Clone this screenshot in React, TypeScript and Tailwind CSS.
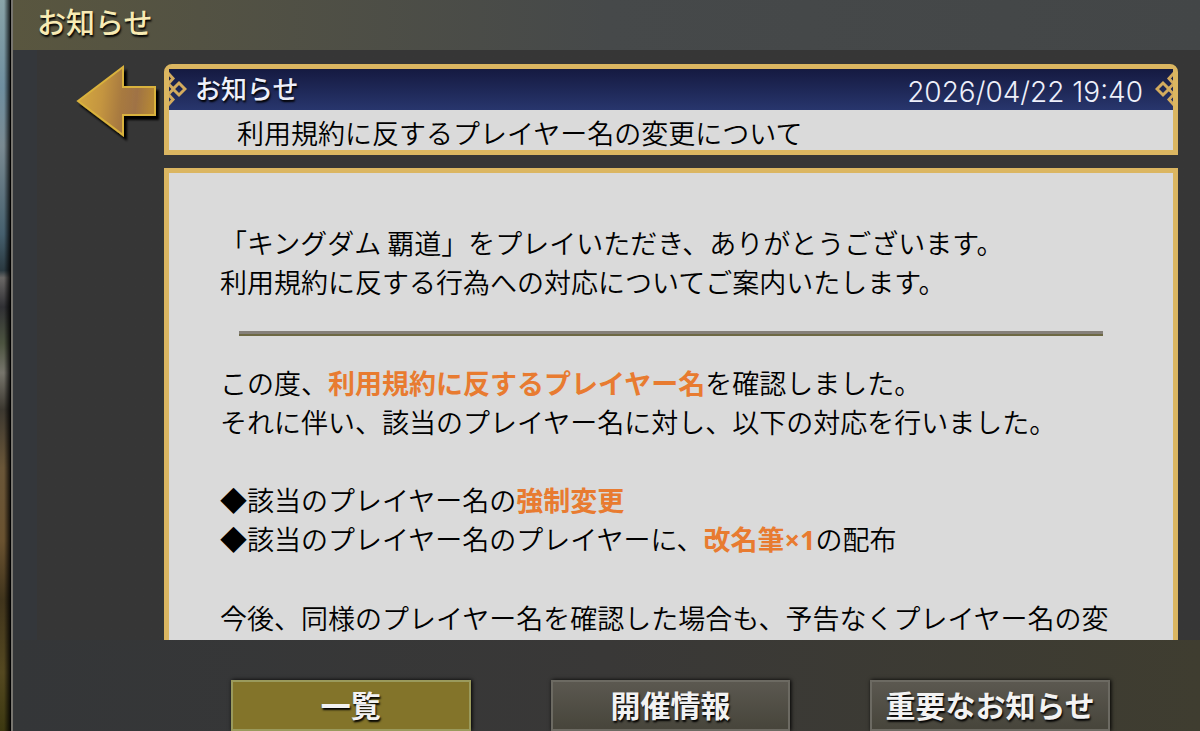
import type { ReactNode } from "react";

const tabs = [
	{ label: "一覧", active: true },
	{ label: "開催情報", active: false },
	{ label: "重要なお知らせ", active: false },
];

function BackArrow() {
	return (
		<svg width="90" height="80" viewBox="0 0 90 80" aria-hidden="true">
			<defs>
				<linearGradient id="arrowFill" x1="0" y1="0" x2="1" y2="0.1">
					<stop offset="0" stopColor="#d6aa42" />
					<stop offset="0.35" stopColor="#c4953f" />
					<stop offset="0.6" stopColor="#a87a40" />
					<stop offset="0.8" stopColor="#9f7245" />
					<stop offset="1" stopColor="#b48636" />
				</linearGradient>
				<filter id="arrowShadow" x="-10%" y="-10%" width="130%" height="130%">
					<feDropShadow dx="3" dy="4" stdDeviation="1" floodColor="#000" floodOpacity="1" />
				</filter>
			</defs>
			<path
				d="M3 37 L48 3 V23 H80 V51 H48 V71 Z"
				fill="url(#arrowFill)"
				stroke="#d9b23c"
				strokeWidth="2"
				filter="url(#arrowShadow)"
			/>
		</svg>
	);
}

function CornerOrnament({ flip = false }: { flip?: boolean }) {
	return (
		<svg
			width="18"
			height="41"
			viewBox="0 0 18 41"
			aria-hidden="true"
			className={flip ? "shrink-0 -scale-x-100" : "shrink-0"}
		>
			<g fill="none" stroke="#d3ab5e" strokeWidth="3">
				<path d="M10 14 L16 20 L10 26 L4 20 Z" />
				<path d="M-1 4 L4 9.5 L-1 15" />
				<path d="M-1 25 L4 30.5 L-1 36" />
				<path d="M0 15.5 L4.5 20 L0 24.5" />
			</g>
		</svg>
	);
}

function Mark({ children }: { children: ReactNode }) {
	return <strong className="font-bold text-[#e87b30]">{children}</strong>;
}

function App() {
	return (
		<div
			lang="ja"
			className="flex h-screen overflow-hidden bg-[#363636] text-black font-['Noto_Sans_CJK_JP',sans-serif]"
		>
			{/* slice of the game scene behind the dialog */}
			<div className="w-[10px] shrink-0 bg-[linear-gradient(to_right,transparent_40%,#000c),linear-gradient(to_bottom,#8aa4a8,#6f8fa0_12%,#7a8a92_20%,#46606e_32%,#2a3940_37%,#6a6866_38%,#303034_42%,#4c5440_47%,#77756c_51%,#3c3830_56%,#6a5638_64%,#6a5230_74%,#40341c_82%,#544820_92%,#3c3810)]" />
			<div className="w-[3px] shrink-0 border-l border-black bg-[#77756f]" />
			<div className="flex min-w-0 flex-1 flex-col">
				<header className="flex h-[50px] shrink-0 items-center bg-linear-to-r from-[#59563f] via-[#46494a] to-[#434647] px-6 pb-2">
					<h1 className="text-[29px] leading-9 font-medium text-[#f8ebb4] [text-shadow:1px_2px_2px_#000]">お知らせ</h1>
				</header>

				<main className="flex min-h-0 flex-1 bg-linear-to-r from-[#34373b] from-[24px] to-[#363636] to-[24px] pt-[14px] pr-[22px]">
					<div className="w-[151px] shrink-0 pl-[62px]">
						<button type="button" aria-label="戻る" className="block cursor-pointer">
							<BackArrow />
						</button>
					</div>
					<div className="flex min-w-0 flex-1 flex-col gap-[13px]">
						<section className="shrink-0 rounded-t-lg border-5 border-[#dbb661] bg-[#dadada]">
							<div className="flex h-[41px] items-center bg-linear-to-b from-[#151a41] to-[#28366d] text-[#eef0fa]">
								<CornerOrnament />
								<h2 className="ml-2 pb-1 text-[26px] leading-9 font-medium [text-shadow:1px_2px_2px_#000]">お知らせ</h2>
								<time dateTime="2026-04-22T19:40" className="mr-3 ml-auto pt-1 text-[28px] leading-9 font-light font-[Inter,sans-serif]">
									2026/04/22 19:40
								</time>
								<CornerOrnament flip />
							</div>
							<p className="h-10 pl-[68px] text-[27px] leading-[46px] font-[350]">利用規約に反するプレイヤー名の変更について</p>
						</section>

						<article className="min-h-0 flex-1 overflow-y-auto border-5 border-b-0 border-[#dbb661] bg-[#dadada] px-[51px] pt-[50px] text-[27px] leading-[39px] font-[350] whitespace-nowrap [scrollbar-width:none]">
							<p>
								「キングダム 覇道」をプレイいただき、ありがとうございます。
								<br />
								利用規約に反する行為への対応についてご案内いたします。
							</p>
							<hr className="mt-[30px] mr-[19px] mb-[27px] ml-[19px] h-[5px] border-0 border-b-2 border-[#6d6843] bg-[#858079]" />
							<p>
								この度、<Mark>利用規約に反するプレイヤー名</Mark>を確認しました。
								<br />
								それに伴い、該当のプレイヤー名に対し、以下の対応を行いました。
							</p>
							<p className="mt-[39px]">
								◆該当のプレイヤー名の<Mark>強制変更</Mark>
								<br />
								◆該当のプレイヤー名のプレイヤーに、
								<Mark>
									改名筆<span className="font-['Open_Sans',sans-serif]">×1</span>
								</Mark>
								の配布
							</p>
							<p className="mt-[39px]">今後、同様のプレイヤー名を確認した場合も、予告なくプレイヤー名の変</p>
						</article>
					</div>
				</main>

				<nav className="flex shrink-0 justify-center gap-20 bg-linear-to-r from-[#343638] via-[#393837] to-[#3f3d30] pt-10 pr-[90px] pl-[218px]">
					{tabs.map((tab) => (
						<button
							key={tab.label}
							type="button"
							aria-pressed={tab.active}
							className={`h-[51px] min-w-0 flex-1 cursor-pointer border-2 pb-1 text-[30px] leading-10 font-bold whitespace-nowrap text-[#f2f2f2] shadow-[1px_0_4px_#000] [text-shadow:1px_2px_2px_#000] ${
								tab.active
									? "border-[#9a9a5c] bg-[#83742a]"
									: "border-[#6c6a62] bg-linear-to-b from-[#5b5850] to-[#47453b]"
							}`}
						>
							{tab.label}
						</button>
					))}
				</nav>
			</div>
		</div>
	);
}

export default App;
